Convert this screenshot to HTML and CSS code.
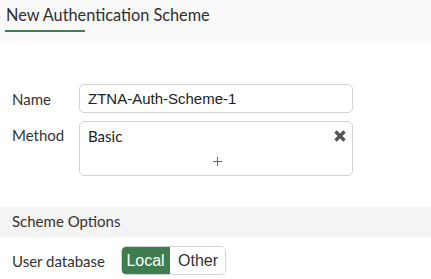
FILE: index.html
```html
<!DOCTYPE html>
<html>
<head>
<meta charset="utf-8">
<link rel="stylesheet" href="styles.css">
</head>
<body>
<div class="header">
  <div class="tab">New Authentication Scheme</div>
</div>
<div class="form">
  <div class="row">
    <label class="label">Name</label>
    <div class="input">ZTNA-Auth-Scheme-1</div>
  </div>
  <div class="row">
    <label class="label label-top">Method</label>
    <div class="multi">
      <div class="chip-line">
        <span class="chip">Basic</span>
        <svg class="remove" width="12" height="12" viewBox="0 0 12 12">
          <path d="M1.5 1.5 L10.5 10.5 M10.5 1.5 L1.5 10.5" stroke="#555" stroke-width="3.4" stroke-linecap="butt"/>
        </svg>
      </div>
      <div class="add">
        <svg width="9" height="9" viewBox="0 0 9 9">
          <path d="M4.5 0 V9 M0 4.5 H9" stroke="#5a6185" stroke-width="1"/>
        </svg>
      </div>
    </div>
  </div>
</div>
<div class="section">Scheme Options</div>
<div class="row row-db">
  <label class="label">User database</label>
  <div class="toggle">
    <span class="opt active">Local</span>
    <span class="opt">Other</span>
  </div>
</div>
</body>
</html>
```
FILE: styles.css
```css
html, body {
  margin: 0;
  padding: 0;
  background: #fff;
  font-family: "Lato", "Liberation Sans", sans-serif;
  color: #333;
  font-size: 14px;
}
.header {
  height: 41px;
  background: #f9f9f9;
  padding-left: 5px;
  box-sizing: border-box;
}
.tab {
  width: 80px;
  white-space: nowrap;
  padding: 5px 0 0 1px;
  font-size: 16.3px;
  line-height: 19px;
  color: #2f2f2f;
  border-bottom: 2px solid #3f7d4f;
  box-sizing: border-box;
  height: 32px;
}
.form {
  padding-top: 43px;
  display: flex;
  flex-direction: column;
  gap: 8px;
}
.row {
  display: flex;
  align-items: center;
  padding-left: 12px;
}
.label {
  width: 67px;
  font-size: 15px;
  color: #333;
}
.label-top {
  align-self: flex-start;
  padding-top: 5px;
}
.input {
  width: 274px;
  height: 29px;
  box-sizing: border-box;
  border: 1px solid #d3d3d3;
  border-radius: 5px;
  padding: 0 8px;
  font-family: "Liberation Sans", Arial, sans-serif;
  font-size: 15px;
  line-height: 27px;
  color: #222;
}
.multi {
  width: 274px;
  height: 55px;
  box-sizing: border-box;
  border: 1px solid #d3d3d3;
  border-radius: 5px;
  padding: 4px 6px 0 8px;
  display: flex;
  flex-direction: column;
}
.chip-line {
  display: flex;
  justify-content: space-between;
  align-items: center;
  height: 20px;
}
.chip {
  font-size: 15px;
  color: #222;
}
.remove {
  display: block;
  margin-top: -1px;
}
.add {
  display: flex;
  justify-content: center;
  margin-top: 11px;
}
.add svg {
  display: block;
}
.section {
  margin-top: 31px;
  height: 30px;
  background: #f4f4f4;
  padding-left: 12px;
  font-size: 15px;
  line-height: 29px;
  color: #333;
}
.row-db {
  margin-top: 9px;
}
.row-db .label {
  width: 109px;
}
.toggle {
  display: flex;
  height: 29px;
  border: 1px solid #d3d3d3;
  border-radius: 5px;
  box-sizing: border-box;
  overflow: hidden;
}
.opt {
  font-family: "Liberation Sans", sans-serif;
  font-size: 16px;
  line-height: 27px;
  padding: 0 7px 0 8px;
  color: #333;
  background: #fff;
}
.opt.active {
  background: #3f7d4f;
  color: #fff;
  width: 49px;
  box-sizing: border-box;
  text-align: center;
  padding: 0;
  margin: -1px 0 -1px -1px;
  line-height: 29px;
}
```
